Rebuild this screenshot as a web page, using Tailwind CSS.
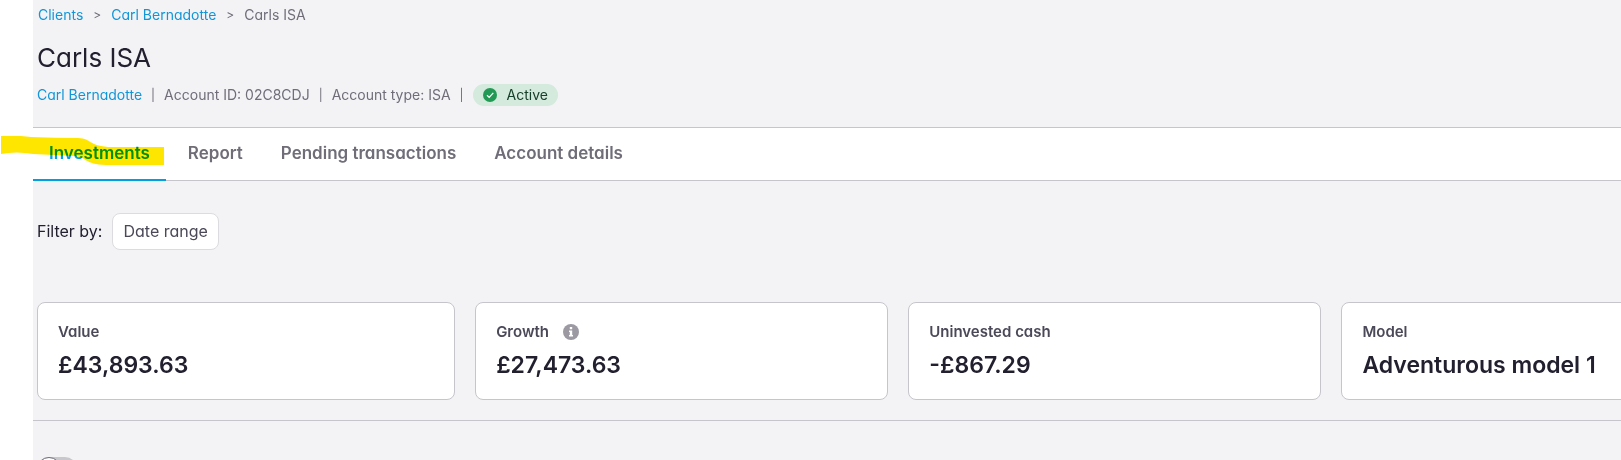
<!DOCTYPE html>
<html lang="en">
<head>
    <meta charset="utf-8">
    <meta name="viewport" content="width=device-width, initial-scale=1">
    <title>Carls ISA</title>
    <script src="https://cdn.jsdelivr.net/npm/@tailwindcss/browser@4"></script>
</head>

<body class="h-screen overflow-hidden bg-white pl-[33px] font-['Inter','Lato',sans-serif] [font-feature-settings:'cv11'] text-[#22202f]">
    <main class="min-h-full bg-[#f3f3f6]">

        <header class="pl-1 pb-5">
            <nav aria-label="Breadcrumb" class="flex gap-[10px] pt-[3px] pl-px text-sm leading-6 text-[#706d79]">
                <a href="#" class="text-[#1296d8]">Clients</a>
                <span class="text-xs leading-6">&gt;</span>
                <a href="#" class="text-[#1296d8]">Carl Bernadotte</a>
                <span class="text-xs leading-6">&gt;</span>
                <span>Carls ISA</span>
            </nav>
            <h1 class="pt-[13px] text-[26px] leading-9">Carls ISA</h1>
            <div class="flex items-center gap-[9px] pt-[7px] text-sm leading-6 text-[#706d79]">
                <a href="#" class="text-[#1296d8]">Carl Bernadotte</a>
                <span class="text-xs leading-6">|</span>
                <span>Account ID: 02C8CDJ</span>
                <span class="text-xs leading-6">|</span>
                <span>Account type: ISA</span>
                <span class="text-xs leading-6">|</span>
                <span class="flex h-[22px] items-center gap-[10px] rounded-full bg-[#d3eadc] px-[10px] text-[#17402a]">
                    <svg class="size-[14px]" viewBox="0 0 14 14" fill="none">
                        <circle cx="7" cy="7" r="7" fill="#229954"/>
                        <path d="M4 7.2l2.2 2.2L10.300 4.900" stroke="#fff" stroke-width="1.300"/>
                    </svg>
                    Active
                </span>
            </div>
        </header>

        <!-- tabs -->
        <nav aria-label="Account" class="relative flex gap-[38px] border-y border-[#c5c5cb] bg-white text-[17px] font-semibold leading-[51px] text-[#706d79]">
            <a href="#" class="-mb-px -mr-4 border-b-2 border-[#009fdf] px-4 text-[#009fdf]">Investments</a>
            <a href="#">Report</a>
            <a href="#">Pending transactions</a>
            <a href="#">Account details</a>
            <!-- marker stroke -->
            <svg class="pointer-events-none absolute -left-8 top-2 mix-blend-multiply" width="163" height="30" viewBox="0 0 163 30" fill="#ffe600" aria-hidden="true">
                <path d="M0 0Q15-1 30 1Q55 2 77 2C92 3 86 9 107 11L163 11V29H105C82 28 88 22 74 20L32 18Q15 15 0 18Z"/>
            </svg>
        </nav>

        <div class="flex items-center gap-[10px] pt-8 pl-1">
            <span id="filter-label" class="pb-0.5">Filter by:</span>
            <button type="button" aria-describedby="filter-label" class="h-[37px] rounded-lg border border-[#dcdce0] bg-white px-[10px] pb-0.5 text-[#4b4858]">Date range</button>
        </div>

        <!-- summary cards, the last one runs past the window -->
        <section class="mt-[52px] overflow-hidden border-b border-[#c5c5cb] pb-5 pl-1">
            <div class="grid w-[109%] grid-cols-[418fr_413fr_413fr_422fr] gap-5">
                <div class="rounded-lg border border-[#c5c5cb] bg-white px-5 pt-[15px] pb-[17px]">
                    <h2 class="text-[15px] font-semibold leading-7 text-[#4b4858]">Value</h2>
                    <p class="pt-0.5 text-[23px] font-semibold leading-[34px]">£43,893.63</p>
                </div>
                <div class="rounded-lg border border-[#c5c5cb] bg-white px-5 pt-[15px] pb-[17px]">
                    <h2 class="flex items-center gap-[14px] text-[15px] font-semibold leading-7 text-[#4b4858]">
                        Growth
                        <svg class="size-4" viewBox="0 0 16 16">
                            <circle cx="8" cy="8" r="8" fill="#9c99a3"/>
                            <path d="M6.800 3h2.400v2.200H6.800zM6 6.500h3.200v4.500H10v1.500H6V11h.8V8H6z" fill="#fff"/>
                        </svg>
                    </h2>
                    <p class="pt-0.5 text-[23px] font-semibold leading-[34px]">£27,473.63</p>
                </div>
                <div class="rounded-lg border border-[#c5c5cb] bg-white px-5 pt-[15px] pb-[17px]">
                    <h2 class="text-[15px] font-semibold leading-7 text-[#4b4858]">Uninvested cash</h2>
                    <p class="pt-0.5 text-[23px] font-semibold leading-[34px]">-£867.29</p>
                </div>
                <div class="rounded-lg border border-[#c5c5cb] bg-white px-5 pt-[15px] pb-[17px]">
                    <h2 class="text-[15px] font-semibold leading-7 text-[#4b4858]">Model</h2>
                    <p class="pt-0.5 text-[23px] font-semibold leading-[34px]">Adventurous model 1</p>
                </div>
            </div>
        </section>

        <div class="pt-9 pl-1">
            <input type="checkbox" role="switch" aria-label="Toggle" class="block h-6 w-10 appearance-none rounded-full bg-[#c8c8cc] before:block before:size-6 before:rounded-full before:border before:border-[#706d79] before:bg-white">
        </div>
    </main>
</body>
</html>
